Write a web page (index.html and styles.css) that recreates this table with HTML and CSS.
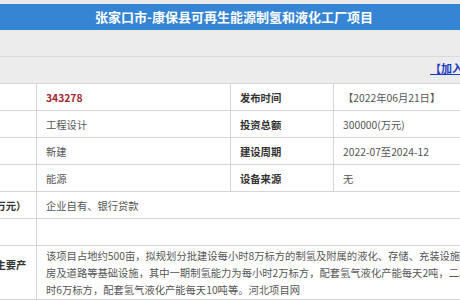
FILE: index.html
```html
<!DOCTYPE html>
<html lang="zh-CN">
<head>
<meta charset="utf-8">
<title>张家口市-康保县可再生能源制氢和液化工厂项目</title>
<link rel="stylesheet" href="styles.css">
</head>
<body>
<div class="top-strip"></div>
<h1 class="titlebar">张家口市-康保县可再生能源制氢和液化工厂项目</h1>
<div class="bar"></div>
<div class="bar bar-link"><a href="#" class="fav">【加入收藏】</a></div>
<table class="info">
  <colgroup>
    <col class="c1"><col class="c2"><col class="c3"><col class="c4">
  </colgroup>
  <tr>
    <th>项目编号</th><td class="code">343278</td>
    <th>发布时间</th><td>【2022年06月21日】</td>
  </tr>
  <tr>
    <th>项目类型</th><td>工程设计</td>
    <th>投资总额</th><td>300000(万元)</td>
  </tr>
  <tr>
    <th>建设性质</th><td>新建</td>
    <th>建设周期</th><td>2022-07至2024-12</td>
  </tr>
  <tr>
    <th>所属行业</th><td>能源</td>
    <th>设备来源</th><td>无</td>
  </tr>
  <tr>
    <th>资金来源（万元）</th><td colspan="3">企业自有、银行贷款</td>
  </tr>
  <tr>
    <th>项目进展</th><td colspan="3"></td>
  </tr>
  <tr class="desc">
    <th>建设内容及主要产品</th>
    <td colspan="3">该项目占地约500亩，拟规划分批建设每小时8万标方的制氢及附属的液化、存储、充装设施及厂<br>房及道路等基础设施，其中一期制氢能力为每小时2万标方，配套氢气液化产能每天2吨，二期制氢能力为每小<br>时6万标方，配套氢气液化产能每天10吨等。河北项目网</td>
  </tr>
</table>
</body>
</html>
```

FILE: styles.css
```css
html, body {
  margin: 0;
  padding: 0;
}
body {
  background: #ececec;
  overflow: hidden;
  font-family: "Noto Sans CJK SC", "Microsoft YaHei", sans-serif;
  font-size: 10.3px;
  color: #555;
}
.top-strip {
  height: 4px;
  background: #e9e9e9;
}
.titlebar {
  margin: 0;
  height: 26px;
  line-height: 26px;
  background: #3585d4;
  color: #fff;
  font-size: 13px;
  font-weight: bold;
  text-align: center;
  padding-left: 8px;
  white-space: nowrap;
}
.bar {
  height: 26px;
  border-bottom: 1px solid #dadada;
}
.bar-link {
  border-bottom: none;
  padding-left: 430px;
  white-space: nowrap;
  line-height: 18px;
  padding-top: 2px;
  height: 24px;
}
.fav {
  color: #1c3cc4;
  font-weight: bold;
  font-size: 11px;
  text-decoration: underline;
}
.info {
  margin-left: -66px;
  border-collapse: collapse;
  table-layout: fixed;
  width: 760px;
  background: #fff;
}
.c1 { width: 102px; }
.c2 { width: 194px; }
.c3 { width: 103px; }
.c4 { width: 361px; }
.info th,
.info td {
  border: 1px solid #d6d6d6;
  height: 26px;
  padding: 0 5px 0 9px;
  line-height: 17px;
  text-align: left;
  vertical-align: middle;
  white-space: nowrap;
}
.info th {
  color: #333;
  font-weight: bold;
  white-space: normal;
}
.info .code {
  color: #a3262e;
  font-weight: bold;
}
.desc td {
  padding-top: 1px;
  padding-bottom: 1px;
}
```
